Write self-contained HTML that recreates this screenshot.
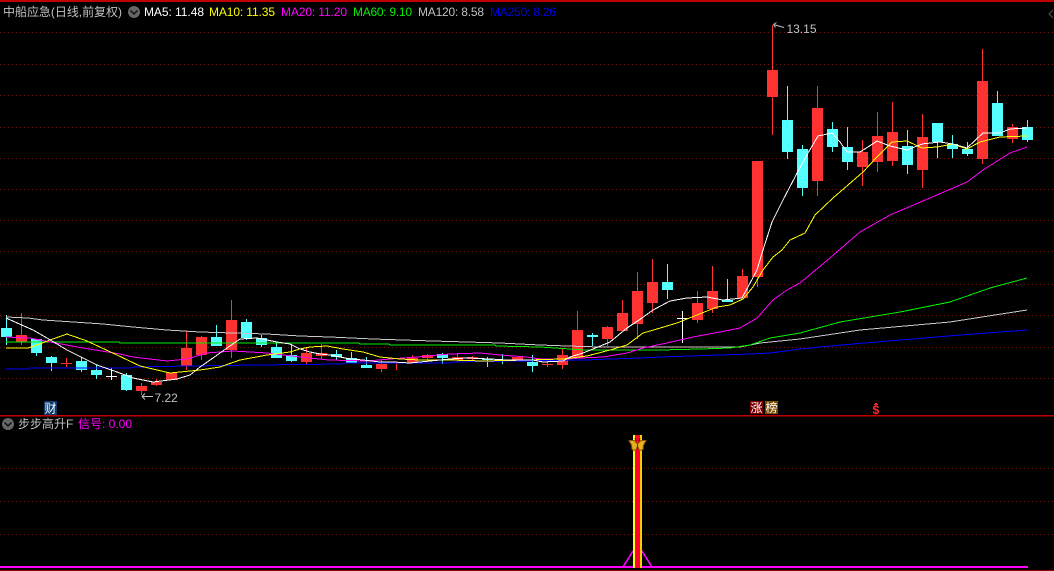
<!DOCTYPE html>
<html><head><meta charset="utf-8"><title>K</title>
<style>
html,body{margin:0;padding:0;background:#000;width:1054px;height:571px;overflow:hidden}
svg{display:block}
text{font-family:"Liberation Sans","WenQuanYi Zen Hei","Noto Sans CJK SC",sans-serif;font-size:12px}
.l{fill:none;stroke-width:1;shape-rendering:crispEdges}
</style></head><body>
<svg width="1054" height="571" viewBox="0 0 1054 571" xmlns="http://www.w3.org/2000/svg">
<rect width="1054" height="571" fill="#000"/>
<!-- frame -->
<g shape-rendering="crispEdges">
<rect x="0" y="0" width="1054" height="2" fill="#c00000"/>
<rect x="0" y="415" width="1054" height="1.5" fill="#c00000"/>
<rect x="0" y="570" width="1054" height="1" fill="#900000"/>
<!-- grid -->
<g stroke="#761414" stroke-width="1" stroke-dasharray="1 3" fill="none">
<path d="M0 32.5H1054M0 64.5H1054M0 95.5H1054M0 127.5H1054M0 158.5H1054M0 189.5H1054M0 220.5H1054M0 251.5H1054M0 284.5H1054M0 315.5H1054M0 347.5H1054M0 378.5H1054M0 468.5H1054M0 501.5H1054M0 534.5H1054"/>
</g>
<!-- red candles -->
<path stroke="#ff3232" fill="none" d="M21.5 313V345M66.5 358V367M61 363.5h11M141.5 383V395M156.5 379V386M186.5 331V370M201.5 336V360M231.5 300V358M306.5 347V364M321.5 344V359M381.5 360V372M396.5 362V370M391 362.5h11M412.5 355V363M427.5 354V361M457.5 353V362M472.5 356V360M547.5 361V367M562.5 348V369M577.5 311V358M607.5 326V346M622.5 300V331M637.5 272V339M652.5 259V313M697.5 291V323M712.5 266V313M742.5 269V298M757.5 161V287M772.5 25V135M817.5 86V196M862.5 140V186M877.5 112V172M892.5 102V166M922.5 114V188M982.5 49V164M1012.5 124V143"/>
<path fill="#ff3232" d="M16 335h11v7h-11zM136 386h11v5h-11zM151 382h11v3h-11zM166 373h11v7h-11zM181 348h11v18h-11zM196 337h11v18h-11zM226 320h11v30h-11zM301 353h11v9h-11zM316 353h11v3h-11zM376 364h11v5h-11zM407 358h11v5h-11zM422 355h11v3h-11zM452 357h11v3h-11zM467 357h11v2h-11zM512 357h11v3h-11zM542 364h11v1h-11zM557 355h11v10h-11zM572 330h11v28h-11zM602 327h11v12h-11zM617 313h11v18h-11zM632 291h11v33h-11zM647 282h11v21h-11zM692 303h11v17h-11zM707 291h11v18h-11zM737 276h11v22h-11zM752 161h11v116h-11zM767 70h11v27h-11zM812 108h11v73h-11zM857 152h11v15h-11zM872 136h11v26h-11zM887 132h11v29h-11zM917 137h11v33h-11zM977 81h11v78h-11zM1007 127h11v12h-11z"/>
<!-- cyan candles -->
<path stroke="#54ffff" fill="none" d="M6.5 315V345M36.5 339V356M51.5 356V371M81.5 357V372M96.5 365V379M126.5 373V391M216.5 325V346M246.5 319V340M261.5 335V347M276.5 342V358M291.5 344V362M336.5 350V360M351.5 352V363M366.5 357V368M442.5 353V364M487.5 357V367M502.5 354V364M532.5 355V372M592.5 333V346M667.5 264V299M727.5 279V302M787.5 86V159M802.5 145V196M832.5 122V152M847.5 127V170M907.5 130V174M937.5 123V158M952.5 135V158M967.5 142V156M997.5 91V136M1027.5 120V142"/>
<path fill="#54ffff" d="M1 328h11v9h-11zM31 339h11v14h-11zM46 357h11v6h-11zM76 361h11v9h-11zM91 370h11v5h-11zM121 375h11v15h-11zM211 337h11v9h-11zM241 322h11v16h-11zM256 338h11v7h-11zM271 347h11v11h-11zM286 355h11v6h-11zM331 354h11v3h-11zM346 358h11v5h-11zM361 365h11v3h-11zM437 354h11v4h-11zM482 359h11v1h-11zM497 360h11v1h-11zM527 362h11v4h-11zM587 335h11v2h-11zM662 282h11v8h-11zM722 300h11v2h-11zM782 120h11v32h-11zM797 149h11v39h-11zM827 129h11v18h-11zM842 147h11v15h-11zM902 146h11v19h-11zM932 123h11v19h-11zM947 144h11v5h-11zM962 149h11v5h-11zM992 103h11v33h-11zM1022 127h11v13h-11z"/>
<!-- white crosses -->
<path stroke="#fff" fill="none" d="M111.5 368V380M106 376.5h11M682.5 311V343M677 318.5h11"/>
</g>
<!-- MA lines -->
<polyline class="l" stroke="#0000ff" points="6,369 29,369 30,368 130,368 134,367 190,366 255,365 343,364 344,363 450,363 451,362 516,361 585,360 610,359 640,358 660,357 690,356 720,355 750,354 770,353 800,349 830,346 900,340 960,335 1027,330"/>
<polyline class="l" stroke="#c8c8c8" points="6,317 28,318 43,320 73,322 103,324 133,327 167,330 200,332 233,333 267,334 300,336 330,337 373,339 433,341 467,342 500,343 540,345 567,346 600,347 693,347 740,347 760,343 800,339 860,330 950,322 1027,310"/>
<polyline class="l" stroke="#00f000" points="6,342 119,342 120,343 359,343 360,344 389,344 390,345 495,345 496,346 540,347 585,350 660,350 700,349 730,348 750,345 770,338 800,333 840,322 900,312 950,302 990,288 1027,278"/>
<polyline class="l" stroke="#ff00ff" points="6,337 30,338 50,342 83,348 120,354 133,357 167,361 187,359 207,353 233,351 267,353 300,357 329,360 367,361 390,359 417,357 450,354 480,353 500,355 527,357 540,359 567,359 580,358 603,357 627,353 643,348 667,343 693,337 720,332 740,328 757,318 773,300 787,290 800,283 830,258 860,232 890,215 930,198 967,182 983,170 1010,153 1027,147"/>
<polyline class="l" stroke="#ffff00" points="6,348 28,348 40,344 50,340 67,334 87,341 117,355 140,366 170,373 200,370 220,367 240,360 267,355 290,352 300,349 310,347 327,346 343,349 363,352 380,357 400,359 420,360 450,360 483,361 527,360 563,359 587,356 610,350 627,345 643,333 657,329 677,323 697,315 717,307 730,305 743,299 753,287 763,270 773,257 782,250 790,240 805,233 815,215 833,198 863,172 877,157 892,142 907,141 922,148 937,147 953,144 967,149 980,142 1000,137 1027,136"/>
<polyline class="l" stroke="#ffffff" points="6,318 33,330 47,338 67,350 97,365 117,372 133,378 153,382 177,379 190,375 200,367 213,358 227,348 240,339 257,338 277,342 290,344 300,349 310,352 320,354 330,355 340,357 350,359 363,360 380,362 393,362 410,363 430,361 450,359 467,358 490,359 507,360 533,360 543,362 563,361 570,357 583,353 593,349 610,342 627,328 642,318 653,310 670,301 687,298 707,297 723,300 742,298 748,287 757,270 763,250 772,222 783,200 795,177 808,153 818,136 832,133 840,142 847,152 860,152 868,147 877,141 890,146 907,150 922,144 940,142 953,144 967,148 983,133 1000,133 1010,129 1027,128"/>
<!-- header -->
<text x="3" y="16" fill="#c0c0c0" textLength="119">中船应急(日线,前复权)</text>
<circle cx="134" cy="12" r="6" fill="#666"/>
<path d="M130.5 10.5L134 14L137.5 10.5" stroke="#111" stroke-width="1.5" fill="none"/>
<text x="144" y="16" fill="#ffffff" textLength="60">MA5: 11.48</text>
<text x="209" y="16" fill="#ffff00" textLength="66">MA10: 11.35</text>
<text x="281" y="16" fill="#ff00ff" textLength="66">MA20: 11.20</text>
<text x="353" y="16" fill="#00f000" textLength="59">MA60: 9.10</text>
<text x="418" y="16" fill="#c0c0c0" textLength="66">MA120: 8.58</text>
<text x="490" y="16" fill="#0000e6" textLength="66">MA250: 8.26</text>
<path d="M1053 10L1049 14L1053 18" stroke="#555" fill="none"/>
<!-- annotations -->
<text x="786.5" y="33" fill="#c0c0c0">13.15</text>
<path d="M773.5 24.5L784 27.5M773.5 24.5l3 -2M773.5 24.5l2 3" stroke="#c0c0c0" fill="none"/>
<text x="154.5" y="402" fill="#c0c0c0">7.22</text>
<path d="M142 396.5H153M142 396.5l3 -3M142 396.5l3 3" stroke="#c0c0c0" fill="none"/>
<!-- badges -->
<rect x="44" y="401" width="13" height="14" fill="#0a3a6e"/>
<text x="44.5" y="412.5" fill="#fff">财</text>
<rect x="750" y="401" width="13" height="13" fill="#7d0000"/>
<text x="750.5" y="412" fill="#fff">涨</text>
<rect x="765" y="401" width="13" height="13" fill="#7d4a00"/>
<text x="765.5" y="412" fill="#fff">榜</text>
<text x="872.5" y="414" fill="#ff2a2a" style="font-size:12px;font-weight:bold">$</text>
<path d="M875 403.5h2M874 404.5h4" stroke="#ff2a2a" fill="none" shape-rendering="crispEdges"/>
<!-- sub pane header -->
<circle cx="8" cy="424" r="6" fill="#666"/>
<path d="M4.5 422.5L8 426L11.5 422.5" stroke="#111" stroke-width="1.5" fill="none"/>
<text x="18" y="428" fill="#c0c0c0">步步高升F</text>
<text x="78" y="428" fill="#ff00ff" textLength="54">信号: 0.00</text>
<!-- signal -->
<g shape-rendering="crispEdges">
<rect x="0" y="566" width="1028" height="2" fill="#ff00ff"/>
<polyline points="623,567 633,551" fill="none" stroke="#ff00ff" stroke-width="1.6"/>
<polyline points="642,551 652,567" fill="none" stroke="#ff00ff" stroke-width="1.6"/>
<rect x="633" y="435" width="9" height="133" fill="#ffff00"/>
<rect x="635" y="435" width="5" height="133" fill="#ff0033"/>
<rect x="640" y="435" width="2" height="133" fill="#ffd000"/>
</g>
<!-- butterfly -->
<path d="M637.5 446L635.5 450.5L632 449.5L631.5 445L629 440.5L634 440.5L637.5 444L641 440.5L646 440.5L643.5 445L643 449.5L639.5 450.5Z" fill="#eab020" stroke="#8a5a00" stroke-width="1"/>
<path d="M637.5 444V450" stroke="#5a3a00" stroke-width="1"/>
<path d="M636 441l-1 -3M639 441l1 -3" stroke="#3a2500" stroke-width="1" fill="none"/>
</svg>
</body></html>
